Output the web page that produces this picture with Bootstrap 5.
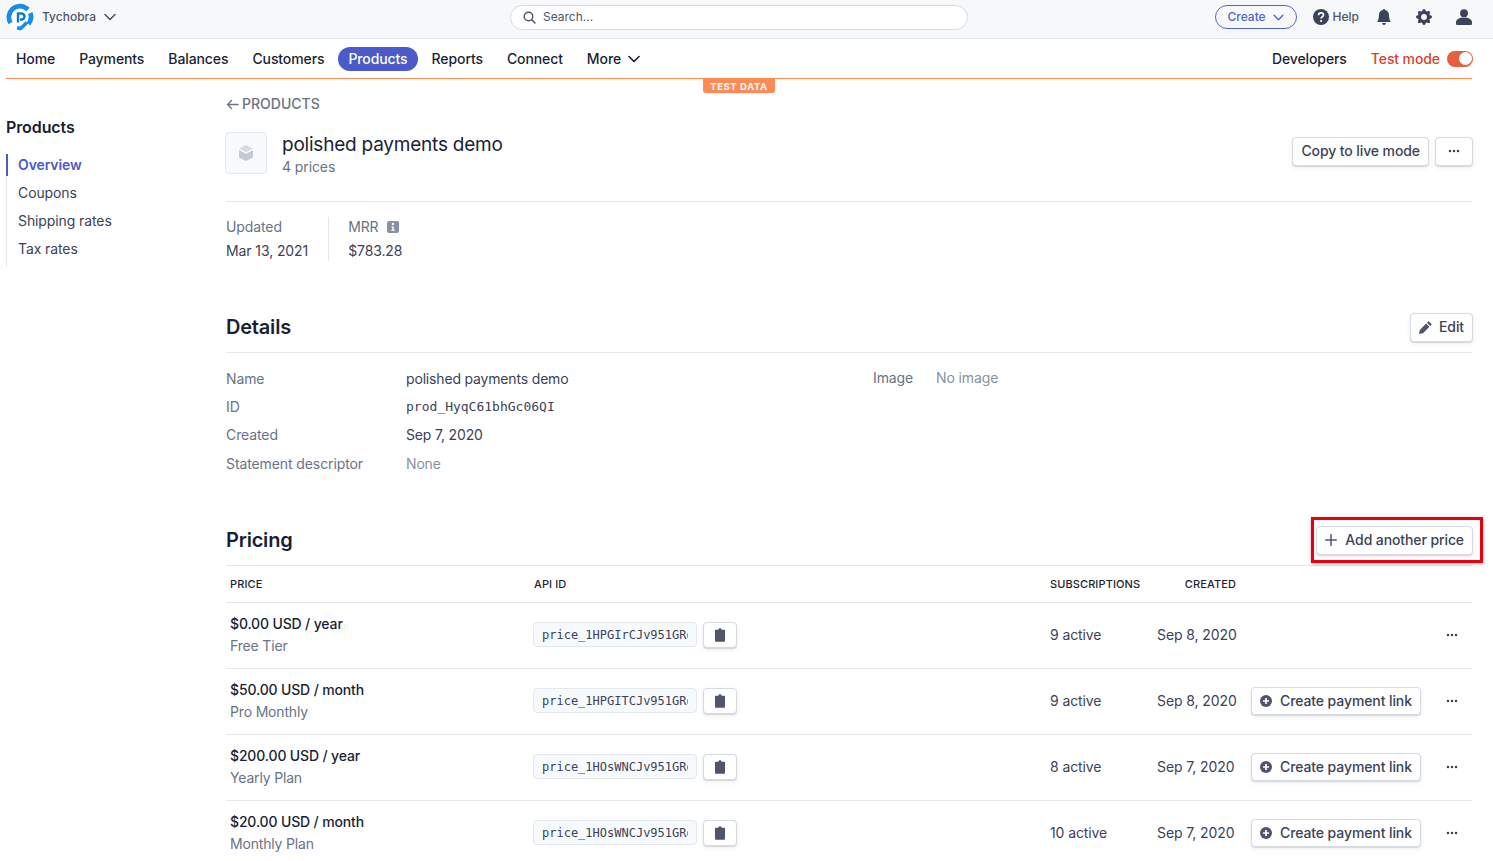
<!doctype html>
<html lang="en">
<head>
<meta charset="utf-8">
<title>polished payments demo</title>
<link href="https://cdn.jsdelivr.net/npm/bootstrap@5.3.0/dist/css/bootstrap.min.css" rel="stylesheet">
<style>
html,body{height:861px;overflow:hidden;background:#fff}
body{font-family:Inter,"Liberation Sans",sans-serif;font-size:14px;line-height:20px;color:#3c4257;letter-spacing:-.1px}
a{text-decoration:none;color:inherit}
svg{display:block;flex:none}
.topbar{height:39px;background:#f6f8fa;border-bottom:1px solid #e3e8ee;padding:0 21px 4px 6px}
.acct{font-size:12px;font-weight:500;color:#4f566b;letter-spacing:0}
.searchbox{width:458px;height:25px;border:1px solid #d5dbe1;border-radius:13px;background:#fff;padding-left:12px;gap:7px;font-size:12px;color:#4f566b;letter-spacing:0}
.left-zone{width:504px}
.createbtn{height:24px;width:82px;border:1px solid #4f65d9;border-radius:12px;color:#4f65d9;font-size:12px;font-weight:500;gap:7px;padding:0;background:#fff0;letter-spacing:0}
.helplink{font-size:12px;font-weight:500;color:#4f566b;gap:4px;letter-spacing:0}
.mainnav{height:40px;border-bottom:1px solid #ff8a55;margin:0 21px 0 6px;position:relative}
.navitem{height:24px;line-height:24px;padding:0 10px;border-radius:12px;color:#1a1f36;font-weight:500;margin-right:4px;gap:7px}
.navitem.onpage{background:#4a5ac9;color:#fff}
.testlabel{color:#d8432b;font-weight:500}
.togglepill{width:26px;height:16px;border-radius:8px;background:#e5603e;padding:1.5px}
.knob{width:13px;height:13px;border-radius:50%;background:#fff}
.testflag{position:absolute;left:697px;top:40px;width:72px;height:14px;background:#ff8a55;color:#fff;font-size:9.5px;line-height:15px;font-weight:700;letter-spacing:.6px;text-align:center;border-radius:0 0 3px 3px}
.sidecol{width:226px;padding:36px 0 0 6px}
.sidehead{font-size:16px;font-weight:600;color:#1a1f36;line-height:24px;margin-bottom:15px}
.sidemenu{border-left:1px solid #e3e8ee;width:fit-content;min-width:100px;padding-bottom:4px}
.sideitem{display:block;height:28px;line-height:28px;padding-left:10px;color:#3c4257;margin-left:-1px;border-left:2px solid transparent}
.sideitem.onpage{color:#4a5ac9;font-weight:600;border-left-color:#4a5ac9;height:22px;line-height:22px;margin:3px 0 3px -1px}
.contentcol{width:1246px;padding-top:15px}
.backlink{color:#697386;font-weight:500;gap:3px;line-height:20px;letter-spacing:0}
.headrow{margin-top:17px;height:42px}
.prodicon{width:42px;height:42px;border:1px solid #e3e8ee;border-radius:4px;background:#f7fafc;margin:0 15px 0 -1px}
.prodtitle{font-size:19px;line-height:25px;color:#1a1f36;font-weight:400;margin:0;letter-spacing:-.22px}
.prodsub{color:#697386;line-height:20px}
.whitebtn{height:29px;background:#fff;border:1px solid #d5dbe1;border-radius:4px;box-shadow:0 1px 1px rgba(0,0,0,.12),0 2px 5px rgba(60,66,87,.08);color:#3c4257;font-weight:500;font-size:14px;line-height:20px;padding:0 8px;gap:7px;letter-spacing:-.1px}
.headacts{gap:6px;margin-right:-1px;padding-top:5px}
.rulediv{border-top:1px solid #e3e8ee;margin-top:27px}
.statsrow{margin-top:15px}
.statcell{height:44px}
.statcell+.statcell{border-left:1px solid #e3e8ee;margin-left:19.5px;padding-left:19.5px}
.statlabel{color:#697386;line-height:20px;margin-bottom:4px;gap:8px}
.statval{line-height:20px}
.secthead{border-bottom:1px solid #e3e8ee;padding-bottom:10px;height:29px;box-sizing:content-box;margin-top:52px}
.secthead h2{font-size:20px;font-weight:600;color:#1a1f36;margin:0;line-height:28px;letter-spacing:-.2px}
.detailgrid{padding-top:12.3px}
.dline{height:28.33px;line-height:28.33px}
.dkey{width:180px;color:#697386}
.dval{width:467px;color:#3c4257;letter-spacing:-.17px}
.monotext{font-family:"DejaVu Sans Mono","Liberation Mono",monospace;font-size:13px;letter-spacing:0}
.faint{color:#8792a2}
.imgkey{width:63px;color:#697386;margin-top:-1px}
.pricehead{margin-top:47.4px;position:relative}
.redmark{position:absolute;right:-10px;top:-9px;width:172px;height:46px;border:3px solid #e8000f;box-shadow:0 1px 4px rgba(0,0,0,.25);pointer-events:none}
.addwrap{position:relative;margin-right:-1px}
.pricetable{table-layout:fixed;width:1246px;margin:0;color:#3c4257;--bs-table-border-color:#e3e8ee}
.pricetable th{font-size:11px;font-weight:500;color:#1a1f36;height:37px;padding:0;vertical-align:middle;letter-spacing:.1px;border-bottom:1px solid #e3e8ee}
.pricetable td{height:66px;padding:0 0 2px;vertical-align:middle;border-bottom:1px solid #e3e8ee}
.pname{color:#1a1f36;font-weight:500;line-height:20px;margin-bottom:2px;letter-spacing:-.15px}
.psub{color:#697386;line-height:20px;letter-spacing:-.17px}
.pricetable .pad4{padding-left:4px}
.pricetable th.apihead{padding-left:1px}
.pricetable td.datecell{padding-left:7px;white-space:nowrap}
.idbox{width:164px;height:25px;border:1px solid #e3e8ee;border-radius:4px;background:#f7fafc;padding:0 8px;margin-right:6px;flex:none}
.idtext{display:block;font-family:"DejaVu Sans Mono","Liberation Mono",monospace;font-size:12px;line-height:25px;overflow:hidden;white-space:nowrap;color:#3c4257;letter-spacing:0;height:23px}
.clipbtn{width:34px;height:26px;padding:0;justify-content:center}
.linkbtn{width:170px;height:28px;padding:0 8px;gap:8px;white-space:nowrap}
.addbtn{gap:8px}
.pricetable td.actwrap{padding-left:15px}
.dotsbtn{width:38px;justify-content:center;padding:0}
.rowtail{margin-right:14px}
</style>
</head>
<body>
<svg width="0" height="0" class="position-absolute">
<symbol id="i-chev" viewBox="0 0 12 8"><path d="M1 1.500l5 5 5-5" fill="none" stroke="currentColor" stroke-width="1.600" stroke-linecap="round" stroke-linejoin="round"/></symbol>
<symbol id="i-dots" viewBox="0 0 12 4"><circle cx="2" cy="2" r="1.250" fill="currentColor"/><circle cx="6" cy="2" r="1.250" fill="currentColor"/><circle cx="10" cy="2" r="1.250" fill="currentColor"/></symbol>
<symbol id="i-clip" viewBox="0 0 14 14"><path d="M5.300 1.800C5.400.8 6.100.2 7 .2s1.600.6 1.700 1.600H11c.6 0 1 .4 1 1v10c0 .6-.4 1-1 1H3c-.6 0-1-.4-1-1v-10c0-.6.4-1 1-1z" fill="#4f566b"/></symbol>
<symbol id="i-plusc" viewBox="0 0 12 12"><circle cx="6" cy="6" r="6" fill="#4f566b"/><path d="M6 3v6M3 6h6" stroke="#fff" stroke-width="1.700"/></symbol>
</svg>

<header class="topbar d-flex align-items-center">
  <div class="left-zone d-flex align-items-center">
    <svg width="28" height="28" viewBox="0 0 28 28" class="me-2" aria-label="Tychobra logo">
      <circle cx="14" cy="14" r="14" fill="#fff"/>
      <path d="M4.600 20A11 11 0 0 1 6.500 6 11 11 0 0 1 22 6.500M24.200 10A11 11 0 0 1 22.500 21" fill="none" stroke="#1a8de8" stroke-width="4.800"/>
      <path d="M12 19.500V10.500h3.500a3 3 0 0 1 0 6H14" fill="none" stroke="#1577c8" stroke-width="2.400"/>
      <path d="M21 19.500l-6.500 6-3.500-.8" fill="none" stroke="#1a8de8" stroke-width="3.600"/>
    </svg>
    <span class="acct me-2">Tychobra</span>
    <svg width="12" height="8" style="color:#4f566b"><use href="#i-chev"/></svg>
  </div>
  <div class="searchbox d-flex align-items-center">
    <svg width="13" height="13" viewBox="0 0 13 13"><circle cx="5.500" cy="5.500" r="4.300" fill="none" stroke="#4f566b" stroke-width="1.400"/><path d="M8.700 8.700l3.300 3.300" stroke="#4f566b" stroke-width="1.500" stroke-linecap="round"/></svg>
    <span>Search...</span>
  </div>
  <div class="ms-auto d-flex align-items-center">
    <button class="btn createbtn d-flex align-items-center justify-content-center" type="button"><span>Create</span><svg width="11" height="7"><use href="#i-chev"/></svg></button>
    <a href="#" class="helplink d-flex align-items-center" style="margin-left:16px">
      <svg width="16" height="16" viewBox="0 0 16 16"><circle cx="8" cy="8" r="8" fill="#3c4257"/><path d="M5.600 6.200c0-1.500 1.100-2.300 2.500-2.300s2.400.8 2.400 2.100c0 1.700-2.400 1.800-2.400 3.400" fill="none" stroke="#fff" stroke-width="1.700"/><circle cx="8.100" cy="12" r="1.100" fill="#fff"/></svg>
      <span>Help</span>
    </a>
    <svg width="16" height="16" viewBox="0 0 16 16" style="margin-left:17px"><path fill="#3c4257" d="M8 16a2 2 0 0 0 2-2H6a2 2 0 0 0 2 2zm.995-14.901a1 1 0 1 0-1.990 0A5.002 5.002 0 0 0 3 6c0 1.098-.5 6-2 7h14c-1.500-1-2-5.902-2-7 0-2.420-1.720-4.440-4.005-4.901z"/></svg>
    <svg width="16" height="16" viewBox="0 0 16 16" style="margin-left:24px"><path fill="#3c4257" d="M9.405 1.050c-.413-1.400-2.397-1.400-2.810 0l-.1.340a1.464 1.464 0 0 1-2.105.872l-.31-.17c-1.283-.698-2.686.705-1.987 1.987l.169.311c.446.820.023 1.841-.872 2.105l-.34.1c-1.400.413-1.400 2.397 0 2.810l.34.1a1.464 1.464 0 0 1 .872 2.105l-.17.310c-.698 1.283.705 2.686 1.987 1.987l.311-.169a1.464 1.464 0 0 1 2.105.872l.1.340c.413 1.400 2.397 1.400 2.810 0l.1-.34a1.464 1.464 0 0 1 2.105-.872l.31.170c1.283.698 2.686-.705 1.987-1.987l-.169-.311a1.464 1.464 0 0 1 .872-2.105l.34-.1c1.400-.413 1.400-2.397 0-2.810l-.34-.1a1.464 1.464 0 0 1-.872-2.105l.17-.31c.698-1.283-.705-2.686-1.987-1.987l-.311.169a1.464 1.464 0 0 1-2.105-.872l-.1-.34zM8 10.930a2.929 2.929 0 1 1 0-5.860 2.929 2.929 0 0 1 0 5.858z"/></svg>
    <svg width="16" height="16" viewBox="0 0 16 16" style="margin-left:24px"><circle cx="8" cy="4.200" r="3.900" fill="#3c4257"/><path fill="#3c4257" d="M0 13.200c0-3 3.500-4.700 8-4.700s8 1.700 8 4.700V15a1 1 0 0 1-1 1H1a1 1 0 0 1-1-1z"/></svg>
  </div>
</header>

<nav class="mainnav d-flex align-items-center">
  <a href="#" class="navitem">Home</a>
  <a href="#" class="navitem">Payments</a>
  <a href="#" class="navitem">Balances</a>
  <a href="#" class="navitem">Customers</a>
  <a href="#" class="navitem onpage">Products</a>
  <a href="#" class="navitem">Reports</a>
  <a href="#" class="navitem">Connect</a>
  <a href="#" class="navitem d-flex align-items-center">More <svg width="12" height="8"><use href="#i-chev"/></svg></a>
  <div class="ms-auto d-flex align-items-center">
    <a href="#" class="navitem">Developers</a>
    <span class="testlabel" style="margin-left:10px;margin-right:7px">Test mode</span>
    <span class="togglepill d-flex justify-content-end" style="margin-right:-1px"><span class="knob"></span></span>
  </div>
  <div class="testflag">TEST DATA</div>
</nav>

<div class="d-flex">
  <aside class="sidecol">
    <div class="sidehead">Products</div>
    <div class="sidemenu">
      <a href="#" class="sideitem onpage">Overview</a>
      <a href="#" class="sideitem">Coupons</a>
      <a href="#" class="sideitem">Shipping rates</a>
      <a href="#" class="sideitem">Tax rates</a>
    </div>
  </aside>
  <main class="contentcol">
    <a href="#" class="backlink d-inline-flex align-items-center">
      <svg width="13" height="11" viewBox="0 0 13 11"><path d="M12 5.500H1.500M5.500 1.500l-4 4 4 4" fill="none" stroke="#697386" stroke-width="1.300" stroke-linecap="round" stroke-linejoin="round"/></svg>
      PRODUCTS
    </a>
    <div class="headrow d-flex">
      <div class="prodicon d-flex align-items-center justify-content-center">
        <svg width="14" height="16" viewBox="0 0 14 16"><path d="M7 0l7 3.600L7 7.200 0 3.600z" fill="#d5dbe1"/><path d="M0 5.300l7 3.500 7-3.500v6.100c0 .7-.4 1.300-1 1.600L7 16l-6-3c-.6-.3-1-.9-1-1.600z" fill="#c1c9d2"/></svg>
      </div>
      <div>
        <h1 class="prodtitle">polished payments demo</h1>
        <div class="prodsub">4 prices</div>
      </div>
      <div class="headacts ms-auto d-flex">
        <button class="btn whitebtn" type="button">Copy to live mode</button>
        <button class="btn whitebtn d-flex align-items-center dotsbtn" type="button" aria-label="More"><svg width="12" height="4"><use href="#i-dots"/></svg></button>
      </div>
    </div>
    <div class="rulediv"></div>
    <div class="statsrow d-flex">
      <div class="statcell">
        <div class="statlabel">Updated</div>
        <div class="statval">Mar 13, 2021</div>
      </div>
      <div class="statcell">
        <div class="statlabel d-flex align-items-center">MRR
          <svg width="12" height="12" viewBox="0 0 12 12"><rect width="12" height="12" rx="2" fill="#8792a2"/><circle cx="6" cy="3" r="1.200" fill="#fff"/><path d="M4.500 5.400h2.300v3.400h1v1H4.300v-1h1V6.400h-.8z" fill="#fff"/></svg>
        </div>
        <div class="statval">$783.28</div>
      </div>
    </div>

    <div class="secthead d-flex justify-content-between align-items-center">
      <h2>Details</h2>
      <button class="btn whitebtn d-flex align-items-center" type="button" style="margin-right:-1px">
        <svg width="13" height="13" viewBox="0 0 16 16"><path fill="#4f566b" d="M12.400.6l3 3c.3.300.3.700 0 1L13.800 6.200 9.800 2.200 11.400.6c.3-.3.700-.3 1 0zM8.800 3.200l4 4-7.800 7.800L0 16l1-5z"/></svg>
        Edit
      </button>
    </div>
    <div class="detailgrid d-flex">
      <div>
        <div class="dline d-flex"><div class="dkey">Name</div><div class="dval">polished payments demo</div></div>
        <div class="dline d-flex"><div class="dkey">ID</div><div class="dval monotext">prod_HyqC61bhGc06QI</div></div>
        <div class="dline d-flex"><div class="dkey">Created</div><div class="dval">Sep 7, 2020</div></div>
        <div class="dline d-flex"><div class="dkey">Statement descriptor</div><div class="dval faint">None</div></div>
      </div>
      <div class="dline d-flex"><div class="imgkey">Image</div><div class="faint" style="margin-top:-1px">No image</div></div>
    </div>

    <div class="secthead pricehead d-flex justify-content-between align-items-center">
      <h2>Pricing</h2>
      <div class="addwrap">
        <button class="btn whitebtn addbtn d-flex align-items-center" type="button">
          <svg width="12" height="12" viewBox="0 0 12 12"><path d="M6 .7v10.600M.7 6h10.600" stroke="#4f566b" stroke-width="1.500" stroke-linecap="round"/></svg>
          Add another price
        </button>
        <span class="redmark"></span>
      </div>
    </div>
    <table class="table pricetable">
      <colgroup><col style="width:307px"><col style="width:517px"><col style="width:100px"><col style="width:86px"><col></colgroup>
      <thead>
        <tr><th class="pad4">PRICE</th><th class="apihead">API ID</th><th>SUBSCRIPTIONS</th><th class="text-end">CREATED</th><th></th></tr>
      </thead>
      <tbody>
        <tr>
          <td class="pad4"><div class="pname">$0.00 USD / year</div><div class="psub">Free Tier</div></td>
          <td><div class="d-flex align-items-center"><div class="idbox"><span class="idtext">price_1HPGIrCJv951GRq</span></div><button class="btn whitebtn d-flex align-items-center clipbtn" type="button" aria-label="Copy"><svg width="14" height="14"><use href="#i-clip"/></svg></button></div></td>
          <td>9 active</td><td class="datecell">Sep 8, 2020</td>
          <td class="actwrap"><div class="d-flex align-items-center justify-content-end"><svg class="rowtail" width="12" height="4"><use href="#i-dots"/></svg></div></td>
        </tr>
        <tr>
          <td class="pad4"><div class="pname">$50.00 USD / month</div><div class="psub">Pro Monthly</div></td>
          <td><div class="d-flex align-items-center"><div class="idbox"><span class="idtext">price_1HPGITCJv951GRq</span></div><button class="btn whitebtn d-flex align-items-center clipbtn" type="button" aria-label="Copy"><svg width="14" height="14"><use href="#i-clip"/></svg></button></div></td>
          <td>9 active</td><td class="datecell">Sep 8, 2020</td>
          <td class="actwrap"><div class="d-flex align-items-center"><button class="btn whitebtn d-flex align-items-center linkbtn" type="button"><svg width="12" height="12"><use href="#i-plusc"/></svg>Create payment link</button><svg class="rowtail ms-auto" width="12" height="4"><use href="#i-dots"/></svg></div></td>
        </tr>
        <tr>
          <td class="pad4"><div class="pname">$200.00 USD / year</div><div class="psub">Yearly Plan</div></td>
          <td><div class="d-flex align-items-center"><div class="idbox"><span class="idtext">price_1HOsWNCJv951GRq</span></div><button class="btn whitebtn d-flex align-items-center clipbtn" type="button" aria-label="Copy"><svg width="14" height="14"><use href="#i-clip"/></svg></button></div></td>
          <td>8 active</td><td class="datecell">Sep 7, 2020</td>
          <td class="actwrap"><div class="d-flex align-items-center"><button class="btn whitebtn d-flex align-items-center linkbtn" type="button"><svg width="12" height="12"><use href="#i-plusc"/></svg>Create payment link</button><svg class="rowtail ms-auto" width="12" height="4"><use href="#i-dots"/></svg></div></td>
        </tr>
        <tr>
          <td class="pad4"><div class="pname">$20.00 USD / month</div><div class="psub">Monthly Plan</div></td>
          <td><div class="d-flex align-items-center"><div class="idbox"><span class="idtext">price_1HOsWNCJv951GRq</span></div><button class="btn whitebtn d-flex align-items-center clipbtn" type="button" aria-label="Copy"><svg width="14" height="14"><use href="#i-clip"/></svg></button></div></td>
          <td>10 active</td><td class="datecell">Sep 7, 2020</td>
          <td class="actwrap"><div class="d-flex align-items-center"><button class="btn whitebtn d-flex align-items-center linkbtn" type="button"><svg width="12" height="12"><use href="#i-plusc"/></svg>Create payment link</button><svg class="rowtail ms-auto" width="12" height="4"><use href="#i-dots"/></svg></div></td>
        </tr>
      </tbody>
    </table>
  </main>
</div>
</body>
</html>
